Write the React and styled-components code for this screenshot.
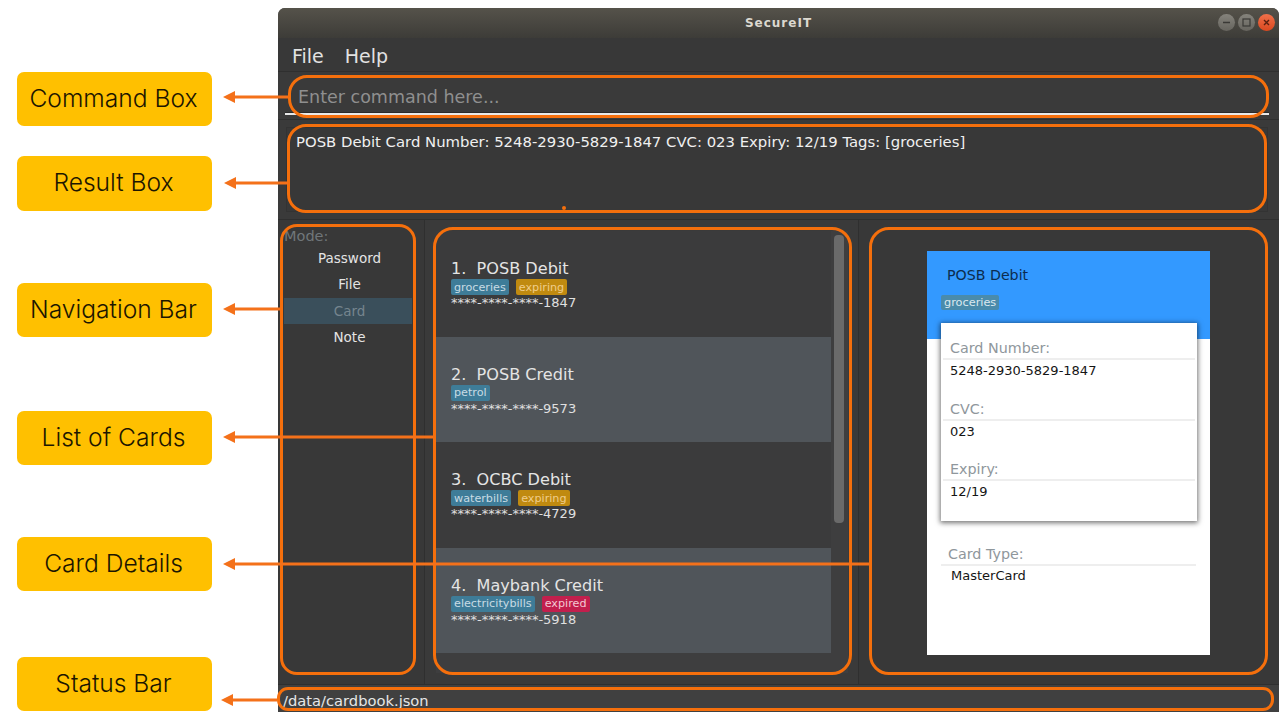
import React from "react";
import styled, { createGlobalStyle } from "styled-components";

const Global = createGlobalStyle`
  html, body { margin: 0; padding: 0; background: #fff; overflow: hidden; }
  * { box-sizing: border-box; }
`;
const Canvas = styled.div`
  position: relative; width: 1280px; height: 720px; background: #fff; overflow: hidden;
  font-family: "DejaVu Sans", sans-serif;
`;
const Window = styled.div`
  margin: 8px 0 0 278px; width: 1001px; height: 704px; display: flex; flex-direction: column;
  background: #383838; border-radius: 7px 7px 0 0; overflow: hidden;
`;
const TitleBar = styled.header`
  height: 30px; flex: none; display: flex; align-items: center; justify-content: center; position: relative;
  background: linear-gradient(#55524a, #3d3c38);
  color: #dcd9d0; font-size: 12px; font-weight: 700; letter-spacing: 1px;
`;
const WinButtons = styled.div`
  position: absolute; right: 4px; top: 6px; display: flex; gap: 3px;
`;
const WinButton = styled.span`
  width: 17px; height: 17px; border-radius: 50%; display: flex; align-items: center; justify-content: center;
  background: ${p => p.$close ? "linear-gradient(#f0704a,#d9481f)" : "linear-gradient(#85837c,#66645e)"};
  color: ${p => p.$close ? "#5a2010" : "#3a3936"};
`;
const MenuBar = styled.nav`
  height: 34px; flex: none; display: flex; align-items: center; gap: 21px; padding: 2px 14px 0;
  font-size: 19px; color: #e2e2e2; background: #383838; border-bottom: 1px solid #2f2f2f;
`;
const CommandRow = styled.div`
  height: 48px; flex: none; padding: 0 10px 4px 7px; background: #3a3a3a; border-bottom: 1px solid #2f2f2f;
`;
const CommandInput = styled.div`
  height: 43px; padding: 8px 13px 0; display: flex; align-items: center;
  font-size: 17.5px; color: #8f8f8f; border-bottom: 2px solid #e8e8e8;
  box-shadow: 0 -1px 0 #2a2a2a inset;
`;
const ResultRow = styled.div`
  height: 100px; flex: none; padding: 7px 11px 7px 8px; background: #3a3a3a; border-bottom: 1px solid #2f2f2f;
`;
const ResultBox = styled.div`
  height: 100%; padding: 4px 9px; font-size: 14.85px; line-height: 20px; color: #f0f0f0;
  border: 1px solid #333; background: #383838; white-space: nowrap;
`;
const Main = styled.div`
  flex: 1; display: flex; min-height: 0; border-bottom: 1px solid #2f2f2f;
`;
const NavColumn = styled.aside`
  width: 147px; flex: none; padding: 7px 12px 0 6px; background: #383838; border-right: 1px solid #2f2f2f;
`;
const ModeLabel = styled.div`
  font-size: 14.5px; line-height: 18px; color: #70767a;
`;
const NavItem = styled.div`
  height: 26.3px; display: flex; align-items: center; justify-content: center; padding-left: 3px; font-size: 13.5px;
  color: ${p => p.$active ? "#75858e" : "#e4e4e4"};
  background: ${p => p.$active ? "#3a4f5b" : "transparent"};
`;
const ListColumn = styled.section`
  width: 434px; flex: none; padding: 11px 10px 11px 11px; background: #3a3a3a; border-right: 1px solid #2f2f2f;
`;
const ListPanel = styled.div`
  height: 100%; display: flex; gap: 3px; background: #3e3e3f;
`;
const Rows = styled.div`
  width: 395px; flex: none;
`;
const Row = styled.article`
  height: 105.6px; padding: 27px 15px 0; display: flex; flex-direction: column;
  background: ${p => p.$alt ? "#50555a" : "#3b3b3c"};
`;
const RowTitle = styled.div`
  font-size: 16.1px; line-height: 21px; color: #e4e4e4; white-space: pre;
`;
const TagLine = styled.div`
  display: flex; gap: 7px; height: 16px; margin-bottom: -1px; align-items: center;
`;
const Tag = styled.span`
  height: 16px; padding: 0 3px; display: inline-flex; align-items: center; border-radius: 2px;
  font-size: 11.2px; color: ${p => p.$kind === "warn" ? "#f0cd8a" : p.$kind === "bad" ? "#f2c9d4" : "#c8dbe4"};
  background: ${p => p.$kind === "warn" ? "#c08a10" : p.$kind === "bad" ? "#c21f4d" : "#3e7c98"};
`;
const Masked = styled.div`
  font-size: 13px; line-height: 17px; color: #e0e0e0;
`;
const Scrollbar = styled.div`
  width: 10px; margin-top: 4px; height: 288px; border-radius: 4px; background: #6a6a6a;
`;
const DetailColumn = styled.section`
  flex: 1; padding: 31px 69px 29px 68px; background: #383838;
`;
const Sheet = styled.div`
  height: 100%; background: #fff; display: flex; flex-direction: column;
`;
const SheetHead = styled.div`
  height: 88px; flex: none; padding: 15px 14px 0; background: #3399ff;
`;
const SheetTitle = styled.div`
  font-size: 14.2px; line-height: 18px; color: #0c2c4e; padding-left: 6px; margin-bottom: 7px;
`;
const SheetTag = styled(Tag)`
  background: #4a8bab; color: #dbe9ef; height: 15px; font-size: 11.3px;
`;
const FieldCard = styled.div`
  margin: -16px 13px 0 14px; height: 198px; background: #fff; padding: 15px 2px 0;
  box-shadow: 0 1px 5px 1px rgba(0,0,0,.55); position: relative;
`;
const Field = styled.div`
  height: 60.5px;
`;
const FieldLabel = styled.div`
  padding-left: 7px; font-size: 14.3px; line-height: 20px; color: #8f979c; border-bottom: 2px solid #eee;
`;
const FieldValue = styled.div`
  padding: 2px 0 0 7px; font-size: 13px; line-height: 18px; color: #151515;
`;
const TypeField = styled.div`
  margin: 23px 14px 0 14px;
`;
const TypeValue = styled(FieldValue)`
  padding: 1px 0 0 10px;
`;
const StatusBar = styled.footer`
  height: 27px; flex: none; display: flex; align-items: center; padding: 3px 0 0 5px;
  font-size: 14.7px; color: #e6e6e6; background: #404040;
`;
const Label = styled.div`
  position: absolute; left: 17px; width: 195px; display: flex; align-items: center; justify-content: center;
  top: ${p => p.$top}px; height: ${p => p.$h}px; padding: 0 2px 3px 0; border-radius: 7px; background: #ffc000;
  font-family: "Inter", sans-serif; font-size: 24.6px; font-weight: 300; color: #1c1600;
`;
const Outline = styled.div`
  position: absolute; left: ${p => p.$x}px; top: ${p => p.$y}px; width: ${p => p.$w}px; height: ${p => p.$h}px;
  border: 3px solid #f56f0c; border-radius: ${p => p.$r}px; pointer-events: none;
`;
const ArrowSvg = styled.svg`
  position: absolute; left: 0; top: 0; pointer-events: none;
`;

const rows = [
  { n: "1.  POSB Debit", tags: [["groceries"], ["expiring", "warn"]], num: "****-****-****-1847" },
  { n: "2.  POSB Credit", tags: [["petrol"]], num: "****-****-****-9573", alt: true },
  { n: "3.  OCBC Debit", tags: [["waterbills"], ["expiring", "warn"]], num: "****-****-****-4729" },
  { n: "4.  Maybank Credit", tags: [["electricitybills"], ["expired", "bad"]], num: "****-****-****-5918", alt: true },
];
const fields = [["Card Number:", "5248-2930-5829-1847"], ["CVC:", "023"], ["Expiry:", "12/19"]];
const labels = [
  ["Command Box", 72, 54], ["Result Box", 156, 55], ["Navigation Bar", 283, 54],
  ["List of Cards", 411, 54], ["Card Details", 537, 54], ["Status Bar", 657, 54],
];
const outlines = [
  [288, 75, 981, 43, 19], [287, 124, 980, 89, 19], [280, 224, 136, 451, 17],
  [433, 227, 419, 448, 20], [869, 227, 399, 448, 20], [277, 687, 997, 24, 11],
];
const arrows = [[97, 288, 223], [183, 288, 224], [309, 280, 223], [437, 433, 223], [564, 869, 223], [700, 277, 221]];

export default function App() {
  return (
    <Canvas>
      <Global />
      <Window>
        <TitleBar>
          SecureIT
          <WinButtons>
            <WinButton>
              <svg width="11" height="11" viewBox="0 0 11 11"><path d="M2 5.5h7" stroke="currentColor" strokeWidth="1.3" /></svg>
            </WinButton>
            <WinButton>
              <svg width="11" height="11" viewBox="0 0 11 11"><rect x="2" y="2" width="7" height="7" fill="none" stroke="currentColor" strokeWidth="1.2" /></svg>
            </WinButton>
            <WinButton $close>
              <svg width="11" height="11" viewBox="0 0 11 11"><path d="M3 3l5 5M8 3l-5 5" stroke="currentColor" strokeWidth="1.4" /></svg>
            </WinButton>
          </WinButtons>
        </TitleBar>
        <MenuBar><span>File</span><span>Help</span></MenuBar>
        <CommandRow><CommandInput>Enter command here...</CommandInput></CommandRow>
        <ResultRow>
          <ResultBox>POSB Debit Card Number: 5248-2930-5829-1847 CVC: 023 Expiry: 12/19 Tags: [groceries]</ResultBox>
        </ResultRow>
        <Main>
          <NavColumn>
            <ModeLabel>Mode:</ModeLabel>
            <NavItem>Password</NavItem>
            <NavItem>File</NavItem>
            <NavItem $active>Card</NavItem>
            <NavItem>Note</NavItem>
          </NavColumn>
          <ListColumn>
            <ListPanel>
              <Rows>
                {rows.map(r => (
                  <Row key={r.n} $alt={r.alt}>
                    <RowTitle>{r.n}</RowTitle>
                    <TagLine>{r.tags.map(([t, k]) => <Tag key={t} $kind={k}>{t}</Tag>)}</TagLine>
                    <Masked>{r.num}</Masked>
                  </Row>
                ))}
              </Rows>
              <Scrollbar />
            </ListPanel>
          </ListColumn>
          <DetailColumn>
            <Sheet>
              <SheetHead>
                <SheetTitle>POSB Debit</SheetTitle>
                <SheetTag>groceries</SheetTag>
              </SheetHead>
              <FieldCard>
                {fields.map(([l, v]) => (
                  <Field key={l}>
                    <FieldLabel>{l}</FieldLabel>
                    <FieldValue>{v}</FieldValue>
                  </Field>
                ))}
              </FieldCard>
              <TypeField>
                <FieldLabel>Card Type:</FieldLabel>
                <TypeValue>MasterCard</TypeValue>
              </TypeField>
            </Sheet>
          </DetailColumn>
        </Main>
        <StatusBar>/data/cardbook.json</StatusBar>
      </Window>
      {labels.map(([t, y, h]) => <Label key={t} $top={y} $h={h}>{t}</Label>)}
      {outlines.map(([x, y, w, h, r]) => <Outline key={x + "-" + y} $x={x} $y={y} $w={w} $h={h} $r={r} />)}
      <ArrowSvg width="1280" height="720" viewBox="0 0 1280 720">
        {arrows.map(([y, from, to]) => (
          <g key={y} fill="#f4711a">
            <rect x={to + 11} y={y - 1.5} width={from - to - 11} height="3" />
            <path d={`M${to} ${y}l12 -6v12z`} />
          </g>
        ))}
        <circle cx="564" cy="208" r="2" fill="#f56f0c" />
      </ArrowSvg>
    </Canvas>
  );
}
